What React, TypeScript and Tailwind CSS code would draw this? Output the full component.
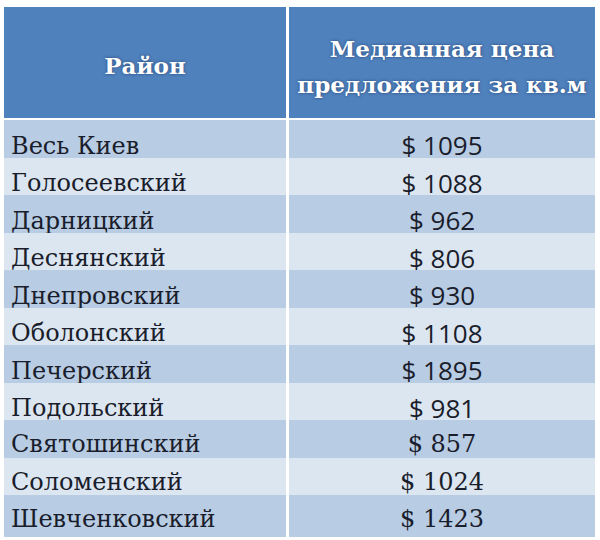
const rows: [string, string, boolean][] = [
  ['Весь Киев', '$ 1095', false],
  ['Голосеевский', '$ 1088', false],
  ['Дарницкий', '$ 962', false],
  ['Деснянский', '$ 806', false],
  ['Днепровский', '$ 930', false],
  ['Оболонский', '$ 1108', false],
  ['Печерский', '$ 1895', false],
  ['Подольский', '$ 981', false],
  ['Святошинский', '$ 857', true],
  ['Соломенский', '$ 1024', true],
  ['Шевченковский', '$ 1423', true],
]

const serif = "font-['DejaVu_Serif',serif]"

export default function App() {
  return (
    <div className="w-[600px] h-[540px] bg-white pt-[7px] pl-[4px]">
      <div className="w-[591px] flex flex-col gap-[2px]">
        <div className={`grid grid-cols-[282px_306px] gap-[3px] h-[111px] text-white font-bold text-[23px] ${serif} [text-shadow:0_0_3px_rgba(20,40,80,0.7)]`}>
          <div className="bg-[#4f81bd] flex items-center justify-center pt-[8px]">Район</div>
          <div className="bg-[#4f81bd] flex items-center justify-center text-center leading-[36px] pt-[8px]">
            Медианная цена<br />предложения за кв.м
          </div>
        </div>
        {rows.map(([name, price, serifNum], i) => (
          <div key={name} className="grid grid-cols-[282px_306px] gap-[3px] h-[35.5px] text-[#1a1d2b] text-[24px]">
            <div className={`${i % 2 === 0 ? 'bg-[#b8cce4]' : 'bg-[#dce6f1]'} flex items-center pl-[7px] pt-[6px] ${serif}`}>{name}</div>
            <div className={`${i % 2 === 0 ? 'bg-[#b8cce4]' : 'bg-[#dce6f1]'} flex items-center justify-center pt-[6px] ${serifNum ? serif : "font-['Open_Sans',sans-serif] text-[26px] font-medium"}`}>{price}</div>
          </div>
        ))}
      </div>
    </div>
  )
}
